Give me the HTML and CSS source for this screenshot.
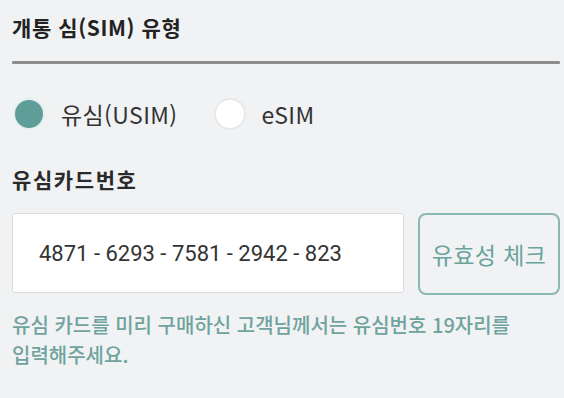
FILE: index.html
```html
<!DOCTYPE html>
<html lang="ko">
<head>
<meta charset="utf-8">
<link rel="stylesheet" href="styles.css">
</head>
<body>
<div class="page">
  <h2 class="title">개통 심(SIM) 유형</h2>
  <div class="divider"></div>
  <div class="radios">
    <label class="radio">
      <span class="dot checked"></span>
      <span class="radio-text">유심(USIM)</span>
    </label>
    <label class="radio">
      <span class="dot"></span>
      <span class="radio-text">eSIM</span>
    </label>
  </div>
  <div class="label">유심카드번호</div>
  <div class="row">
    <div class="input">4871 - 6293 - 7581 - 2942 - 823</div>
    <button class="check">유효성 체크</button>
  </div>
  <p class="help">유심 카드를 미리 구매하신 고객님께서는 유심번호 19자리를 입력해주세요.</p>
</div>
</body>
</html>
```
FILE: styles.css
```css
html, body {
  margin: 0;
  padding: 0;
  background: #f1f2f4;
}
body {
  font-family: "Roboto", "Noto Sans CJK KR", sans-serif;
  color: #2b2b2b;
}
.page {
  padding: 12px 4px 0 12px;
}
.title {
  margin: 0;
  font-family: "Noto Sans CJK KR", sans-serif;
  font-size: 21px;
  font-weight: 700;
  letter-spacing: 0.6px;
  line-height: 30px;
  color: #222;
}
.divider {
  margin-top: 19px;
  height: 3px;
  background: #8c8c8c;
  border-radius: 1px;
}
.radios {
  display: flex;
  align-items: center;
  gap: 36px;
  margin-top: 34px;
  padding-left: 1px;
}
.radio {
  display: flex;
  align-items: center;
  gap: 16px;
}
.dot {
  width: 28px;
  height: 28px;
  border-radius: 50%;
  background: #fff;
  border: 2px solid #e6e8e9;
  box-sizing: content-box;
}
.dot.checked {
  background: #5f9e98;
  border-color: #e3f0ee;
}
.radio-text {
  font-size: 23px;
  letter-spacing: 0.4px;
  line-height: 32px;
  color: #333;
  font-family: "Noto Sans CJK KR", sans-serif;
}
.label {
  margin-top: 35px;
  font-family: "Noto Sans CJK KR", sans-serif;
  font-size: 21px;
  font-weight: 700;
  letter-spacing: 1.6px;
  color: #2a2a2a;
  line-height: 28px;
}
.row {
  display: flex;
  gap: 14px;
  margin-top: 20px;
}
.input {
  width: 392px;
  height: 80px;
  background: #fff;
  border: 1px solid #dcdcdc;
  border-radius: 3px;
  display: flex;
  align-items: center;
  padding-left: 26px;
  box-sizing: border-box;
  font-size: 22px;
  color: #333;
}
.check {
  width: 142px;
  height: 82px;
  background: transparent;
  border: 2px solid #8bb8b2;
  border-radius: 8px;
  font-family: "Noto Sans CJK KR", sans-serif;
  font-size: 23px;
  letter-spacing: 0.4px;
  color: #6aa39c;
  padding: 0;
}
.help {
  margin: 15px 0 0;
  font-family: "Noto Sans CJK KR", sans-serif;
  font-size: 20px;
  font-weight: 500;
  letter-spacing: 0;
  line-height: 30px;
  color: #6fa39d;
  word-break: keep-all;
  padding-right: 20px;
}
```
